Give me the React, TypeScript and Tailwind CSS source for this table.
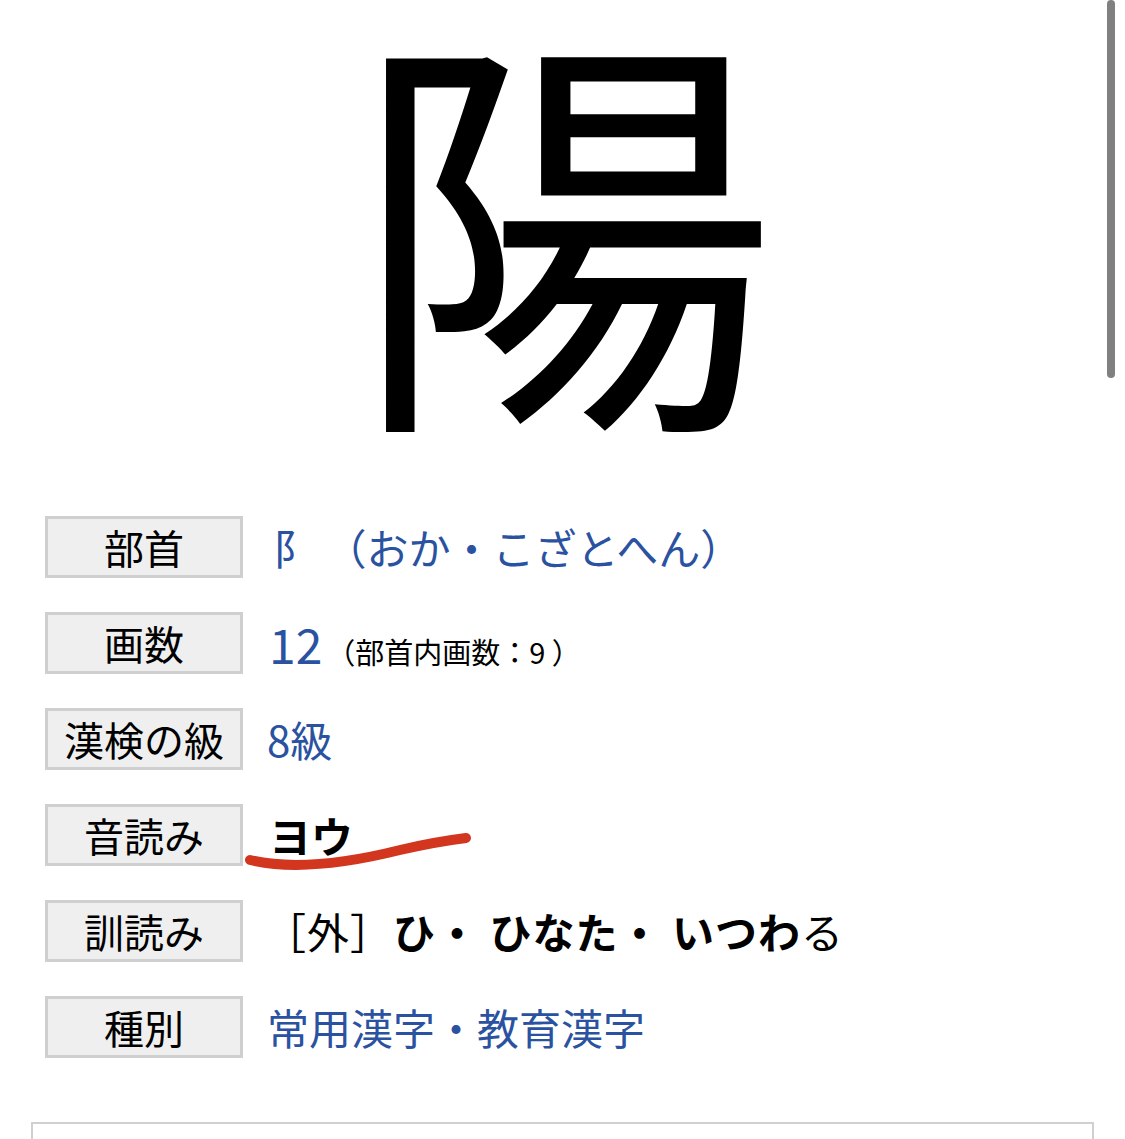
const rows: { label: string; value: React.ReactNode }[] = [
  {
    label: "部首",
    value: (
      <span className="text-[#2a52a0] text-[42px] pl-[4px]">
        阝&nbsp;（おか・こざとへん）
      </span>
    ),
  },
  {
    label: "画数",
    value: (
      <span className="flex items-baseline">
        <span className="text-[#2a52a0] text-[48px]">12</span>
        <span className="text-[29px] text-black ml-[4px]">（部首内画数：9 ）</span>
      </span>
    ),
  },
  {
    label: "漢検の級",
    value: <span className="text-[#2a52a0] text-[42px] -ml-[2px]">8級</span>,
  },
  {
    label: "音読み",
    value: <span className="text-black text-[42px] font-bold">ヨウ</span>,
  },
  {
    label: "訓読み",
    value: (
      <span className="text-black text-[42px] -ml-[5px] tracking-[1px]">
        ［外］<b>ひ・ ひなた・ いつわ</b>る
      </span>
    ),
  },
  {
    label: "種別",
    value: (
      <span className="text-[#2a52a0] text-[42px] -ml-[2px]">常用漢字・教育漢字</span>
    ),
  },
];

export default function App() {
  return (
    <div
      className="relative w-[1125px] h-[1139px] overflow-hidden bg-white"
      style={{ fontFamily: '"Noto Sans CJK JP", "Noto Sans", sans-serif' }}
    >
      <div className="flex justify-center pl-[4px]">
        <div className="text-[426px] leading-[426px] text-black">陽</div>
      </div>

      <div className="flex flex-col gap-[34px] pl-[45px] mt-[90px]">
        {rows.map((row) => (
          <div key={row.label} className="flex items-center h-[62px]">
            <div className="w-[198px] h-[62px] flex items-center justify-center bg-[#efefef] border-[3px] border-[#cfcfcf] text-[40px] leading-none text-black whitespace-nowrap">
              {row.label}
            </div>
            <div className="ml-[26px] leading-none whitespace-nowrap">{row.value}</div>
          </div>
        ))}
      </div>

      <div className="mx-[31px] mt-[64px] h-[60px] border-2 border-[#d0d0d0]"></div>

      {/* red hand-drawn underline */}
      <svg
        className="absolute left-0 top-0 pointer-events-none"
        width="1125"
        height="1139"
      >
        <path
          d="M250 860 C 300 872, 360 860, 400 850 C 430 843, 450 840, 466 838"
          stroke="#d2361f"
          strokeWidth="10"
          strokeLinecap="round"
          fill="none"
        />
      </svg>

      {/* scrollbar */}
      <div className="absolute right-[10px] top-0 w-[8px] h-[378px] rounded-full bg-[#808080]"></div>
    </div>
  );
}
